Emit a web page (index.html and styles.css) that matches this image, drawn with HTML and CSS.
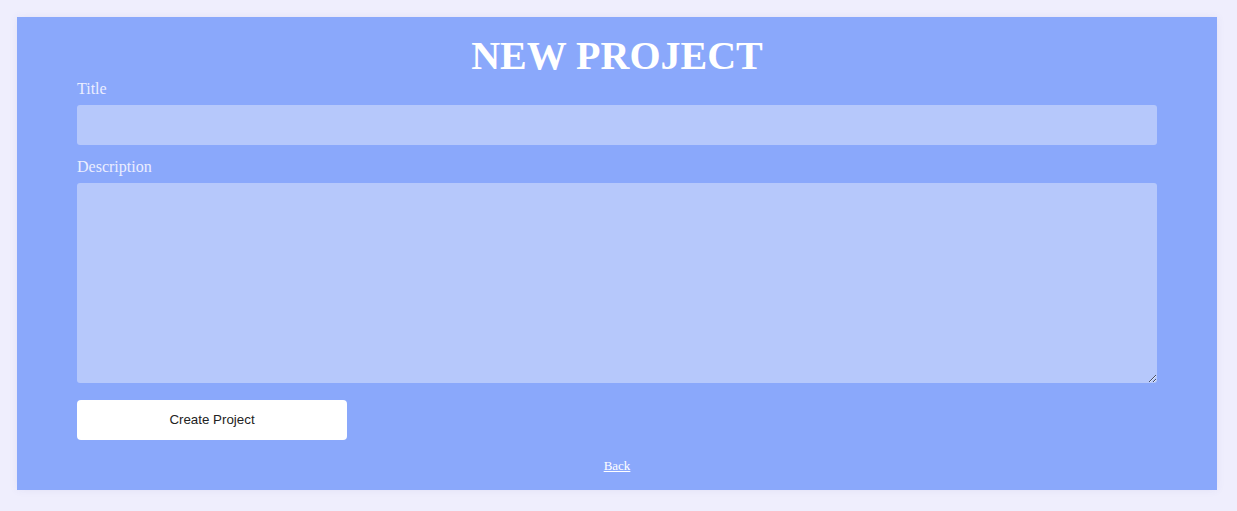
FILE: index.html
```html
<!DOCTYPE html>
<html>
<head>
<meta charset="utf-8">
<title>New Project</title>
<link rel="stylesheet" href="styles.css">
</head>
<body>
<div class="card">
  <h1 class="heading">NEW PROJECT</h1>
  <form class="form">
    <label class="label" for="title">Title</label>
    <input class="field" id="title" type="text">
    <label class="label label-gap" for="desc">Description</label>
    <textarea class="field area" id="desc"></textarea>
    <button class="btn" type="button">Create Project</button>
  </form>
  <div class="back-row"><a class="back" href="#">Back</a></div>
</div>
</body>
</html>
```
FILE: styles.css
```css
html, body {
  margin: 0;
  padding: 0;
}
body {
  background: #efeefd;
  padding: 17px;
  font-family: "Liberation Serif", "Times New Roman", serif;
}
.card {
  width: 1200px;
  box-sizing: border-box;
  background: #8aa8fb;
  padding: 16px 60px 17px;
  box-shadow: 0 0 8px rgba(80, 80, 160, 0.08);
}
.heading {
  margin: 0;
  font-size: 40px;
  line-height: 46px;
  font-weight: bold;
  color: #ffffff;
  text-align: center;
}
.form {
  display: flex;
  flex-direction: column;
}
.label {
  font-size: 16px;
  line-height: 18px;
  color: #eceeff;
  margin-top: 1px;
  margin-bottom: 7px;
}
.label-gap {
  margin-top: 13px;
}
.field {
  height: 40px;
  box-sizing: border-box;
  border: none;
  border-radius: 3px;
  background: #b6c8fb;
  padding: 6px 10px;
  font-family: "Liberation Serif", serif;
  font-size: 16px;
  outline: none;
}
.area {
  height: 200px;
  resize: both;
}
.btn {
  margin-top: 17px;
  width: 270px;
  height: 40px;
  padding: 0 0 2px;
  border: none;
  border-radius: 4px;
  background: #ffffff;
  color: #222222;
  font-family: "Liberation Sans", Arial, sans-serif;
  font-size: 13.333px;
}
.back-row {
  margin-top: 18px;
  text-align: center;
  font-size: 13px;
  line-height: 15px;
}
.back {
  color: #ffffff;
  text-decoration: underline;
}
```
